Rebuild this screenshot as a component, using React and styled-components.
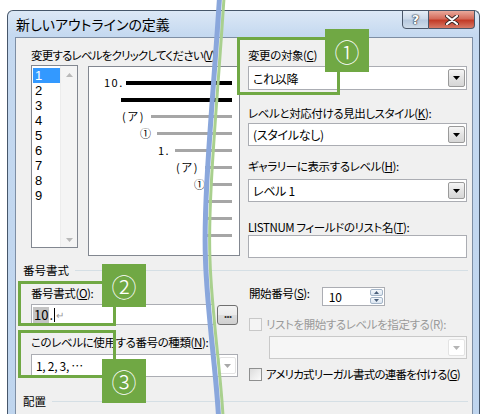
import React from 'react';
import styled, { createGlobalStyle } from 'styled-components';

const FONT = `"Noto Sans CJK JP", "Noto Sans", sans-serif`;

const GlobalStyle = createGlobalStyle`
  html, body { margin: 0; padding: 0; background: #fff; }
  body {
    font-family: ${FONT};
    font-size: 12px;
    color: #000;
    font-feature-settings: "palt";
  }
  * { box-sizing: border-box; }
`;

const Stage = styled.div`
  position: relative;
  width: 491px;
  height: 414px;
  overflow: hidden;
  background: #fff;
  padding: 10px 0 0 7px;
`;

const Window = styled.div`
  width: 473px;
  height: 420px;
  border: 1px solid #46566a;
  border-bottom: none;
  border-radius: 6px 6px 0 0;
  background: linear-gradient(#dce8f6, #c5d9f0 24px, #bfd5ee);
  padding: 0 6px 0 7px;
  display: flex;
  flex-direction: column;
`;

const TitleBar = styled.div`
  height: 26px;
  display: flex;
  justify-content: space-between;
  align-items: flex-start;
`;

const Title = styled.div`
  font-size: 14px;
  line-height: 26px;
  padding-left: 1px;
  color: #000;
`;

const Caption = styled.div`
  display: flex;
  margin-top: -1px;
  margin-right: -2px;
`;

const CapButton = styled.div`
  height: 19px;
  width: ${p => p.$w}px;
  border: 1px solid #4a5769;
  border-left-width: ${p => (p.$close ? 0 : 1)}px;
  border-radius: ${p => (p.$close ? '0 0 4px 0' : '0 0 0 4px')};
  background: ${p =>
    p.$close
      ? 'linear-gradient(#e9a99b, #d46b5a 45%, #c23b27 55%, #d77a66)'
      : 'linear-gradient(#e6eef7, #ccdaea 45%, #b7c9de 55%, #cfdcea)'};
  display: flex;
  align-items: center;
  justify-content: center;
  color: #fff;
  font-family: "DejaVu Sans", sans-serif;
  font-weight: bold;
  font-size: 13px;
  text-shadow: 0 0 1px #2b3440, 0 0 1px #2b3440, 0 0 2px #2b3440;
`;

const Client = styled.div`
  flex: 1;
  background: #f0f0f0;
  border: 1px solid #7d8ea4;
  border-bottom: none;
  display: flex;
  flex-direction: column;
`;

const TopSection = styled.div`
  display: flex;
  padding: 9px 0 0 15px;
  height: 220px;
`;

const LeftCol = styled.div`
  width: ${p => p.$w}px;
  display: flex;
  flex-direction: column;
`;

const RightCol = styled.div`
  width: ${p => p.$w}px;
  margin-left: ${p => p.$ml}px;
  display: flex;
  flex-direction: column;
`;

const Label = styled.div`
  line-height: 16px;
  height: 16px;
  font-size: 11.5px;
  letter-spacing: ${p => (p.$tight ? -0.8 : -0.4)}px;
  white-space: nowrap;
  margin-top: ${p => p.$mt || 0}px;
  color: ${p => (p.$disabled ? '#9a9a9a' : '#000')};
  u { text-decoration: underline; text-underline-offset: 1px; }
`;

const LevelRow = styled.div`
  display: flex;
  align-items: flex-start;
  margin-top: 2px;
`;

const ListBox = styled.div`
  width: 47px;
  height: 183px;
  background: #fff;
  border: 1px solid #828790;
  display: flex;
`;

const ListItems = styled.div`
  flex: 1;
  padding: 2px 0 0 1px;
`;

const ListItem = styled.div`
  height: 15px;
  line-height: 15px;
  font-family: "Liberation Sans", Arial, sans-serif;
  font-size: 13px;
  padding-left: 2px;
  background: ${p => (p.$selected ? '#3399ff' : 'transparent')};
  color: ${p => (p.$selected ? '#fff' : '#000')};
`;

const ScrollTrack = styled.div`
  width: 17px;
  background: #f4f4f4;
  border-left: 1px solid #ececec;
  display: flex;
  flex-direction: column;
  justify-content: space-between;
  align-items: center;
  padding: 7px 0 5px;
`;

const Preview = styled.div`
  width: 152px;
  height: 190px;
  margin: 1px 0 0 10px;
  background: #fff;
  border: 1px solid #828790;
  padding: 7px 7px 0 0;
  font-feature-settings: normal;
`;

const PreviewRow = styled.div`
  height: 17px;
  display: flex;
  align-items: center;
  padding-left: ${p => p.$lx}px;
`;

const PreviewLabel = styled.span`
  flex: none;
  width: ${p => p.$w}px;
  font-size: 11px;
  letter-spacing: 1.5px;
  white-space: nowrap;
  line-height: 17px;
`;

const Bar = styled.div`
  flex: 1;
  height: ${p => (p.$dark ? 4 : 3)}px;
  background: ${p => (p.$dark ? '#000' : '#a6a6a6')};
`;

const Select = styled.div`
  height: ${p => p.$h || 23}px;
  margin-top: ${p => p.$mt || 0}px;
  margin-left: ${p => p.$ml || 0}px;
  background: ${p => (p.$disabled ? '#f6f6f6' : '#fff')};
  border: 1px solid ${p => (p.$disabled ? '#c9c9c9' : '#abadb3')};
  display: flex;
  align-items: center;
  justify-content: space-between;
  padding: 0 1px 0 4px;
  font-size: 12px;
  letter-spacing: -0.3px;
  white-space: nowrap;
`;

const DropButton = styled.div`
  width: 17px;
  height: calc(100% - 4px);
  border: 1px solid ${p => (p.$light ? '#e3e3e3' : '#9a9a9a')};
  background: ${p => (p.$light ? '#fff' : 'linear-gradient(#f6f6f6, #e3e3e3 50%, #d6d6d6)')};
  border-radius: 2px;
  display: flex;
  align-items: center;
  justify-content: center;
`;

const TextInput = styled.div`
  height: ${p => p.$h || 22}px;
  margin-top: ${p => p.$mt || 0}px;
  background: #fff;
  border: 1px solid #abadb3;
`;

const GroupHeader = styled.div`
  display: flex;
  align-items: center;
  height: 16px;
  line-height: 16px;
  font-size: 11.5px;
  margin-top: ${p => p.$mt}px;
  padding: 0 4px 0 7px;
  &::after {
    content: '';
    flex: 1;
    height: 1px;
    margin-left: 6px;
    background: #d5dfe5;
  }
`;

const BottomSection = styled.div`
  display: flex;
  padding-left: 15px;
  height: 104px;
`;

const InputRow = styled.div`
  display: flex;
  align-items: center;
  margin-top: 3px;
  height: 21px;
`;

const FormatInput = styled.div`
  width: 183px;
  height: 21px;
  background: #fff;
  border: 1px solid #abadb3;
  display: flex;
  align-items: center;
  padding-left: 1px;
  font-size: 13px;
`;

const Selected = styled.span`
  background: #c4c4c4;
  padding: 0 1px;
  line-height: 16px;
`;

const Caret = styled.span`
  display: inline-block;
  width: 1px;
  height: 14px;
  background: #000;
  margin: 0 1px;
`;

const Pilcrow = styled.span`
  color: #9a9a9a;
  font-size: 10px;
`;

const DotsButton = styled.div`
  width: 21px;
  height: 20px;
  margin-left: 3px;
  border: 1px solid #707070;
  border-radius: 3px;
  background: linear-gradient(#f3f3f3, #ebebeb 50%, #dddddd 51%, #cfcfcf);
  font-size: 11px;
  line-height: 14px;
  text-align: center;
  letter-spacing: -1px;
  font-weight: bold;
  color: #333;
`;

const StartRow = styled.div`
  display: flex;
  align-items: flex-start;
  margin-top: 9px;
  height: 19px;
`;

const SpinBox = styled.div`
  width: 63px;
  height: 19px;
  margin: 0 0 0 12px;
  background: #fff;
  border: 1px solid #abadb3;
  display: flex;
  justify-content: space-between;
  padding-left: 6px;
  font-size: 12px;
  line-height: 17px;
`;

const SpinButtons = styled.div`
  width: 15px;
  display: flex;
  flex-direction: column;
  padding: 1px;
  gap: 1px;
`;

const SpinHalf = styled.div`
  flex: 1;
  border: 1px solid #a4b5c8;
  border-radius: 2px;
  background: linear-gradient(#f4f8fc, #dbe5f0);
  display: flex;
  align-items: center;
  justify-content: center;
`;

const CheckRow = styled.div`
  display: flex;
  align-items: center;
  height: 16px;
  margin-top: ${p => p.$mt}px;
  gap: 4px;
`;

const CheckBox = styled.div`
  width: 13px;
  height: 13px;
  flex: none;
  border: 1px solid ${p => (p.$disabled ? '#c8c8c8' : '#8e8f8f')};
  background: ${p => (p.$disabled ? '#f4f4f4' : 'linear-gradient(135deg, #dcdcdc, #fbfbfb)')};
`;

const Outline = styled.div`
  position: absolute;
  left: ${p => p.$x}px;
  top: ${p => p.$y}px;
  width: ${p => p.$w}px;
  height: ${p => p.$h}px;
  border: 3px solid #70a844;
`;

const Badge = styled.div`
  position: absolute;
  left: ${p => p.$x}px;
  top: ${p => p.$y}px;
  width: 44px;
  height: ${p => p.$h}px;
  background: #70a844;
  color: #fff;
  font-size: 25px;
  font-weight: 300;
  display: flex;
  align-items: center;
  justify-content: center;
  font-feature-settings: normal;
`;

const Tear = styled.svg`
  position: absolute;
  left: 0;
  top: 0;
  pointer-events: none;
`;

const Arrow = ({ up, color = '#000', w = 7, h = 4 }) => (
  <svg width={w} height={h} viewBox="0 0 7 4">
    <polygon points={up ? '0,4 7,4 3.5,0' : '0,0 7,0 3.5,4'} fill={color} />
  </svg>
);

const rows = [
  { label: '10.', lx: 15, bx: 37, dark: true },
  { label: '', lx: 32, bx: 32, dark: true },
  { label: '(ア)', lx: 33, bx: 62 },
  { label: '①', lx: 51, bx: 68 },
  { label: '1.', lx: 69, bx: 86 },
  { label: '(ア)', lx: 87, bx: 116 },
  { label: '①', lx: 105, bx: 122 },
  { label: '', lx: 118, bx: 118 },
  { label: '', lx: 118, bx: 118 },
  { label: '', lx: 118, bx: 118 },
];

const tearPath = 'M219.5 -2 C 213 100, 203 200, 205.5 260 C 207 310, 216 370, 218.5 416';

export default function App() {
  return (
    <Stage>
      <GlobalStyle />
      <Window>
        <TitleBar>
          <Title>新しいアウトラインの定義</Title>
          <Caption>
            <CapButton $w={27}>?</CapButton>
            <CapButton $w={46} $close>
              <svg width="14" height="10" viewBox="0 0 14 10">
                <path d="M2 1 L12 9 M12 1 L2 9" stroke="#3a2a28" strokeWidth="4" strokeLinecap="round" />
                <path d="M2 1 L12 9 M12 1 L2 9" stroke="#fff" strokeWidth="2.2" strokeLinecap="round" />
              </svg>
            </CapButton>
          </Caption>
        </TitleBar>
        <Client>
          <TopSection>
            <LeftCol $w={209}>
              <Label $tight>変更するレベルをクリックしてください(<u>V</u>)</Label>
              <LevelRow>
                <ListBox>
                  <ListItems>
                    {[1, 2, 3, 4, 5, 6, 7, 8, 9].map(n => (
                      <ListItem key={n} $selected={n === 1}>{n}</ListItem>
                    ))}
                  </ListItems>
                  <ScrollTrack>
                    <Arrow up color="#b9b9b9" />
                    <Arrow color="#b9b9b9" />
                  </ScrollTrack>
                </ListBox>
                <Preview>
                  {rows.map((r, i) => (
                    <PreviewRow key={i} $lx={r.lx}>
                      <PreviewLabel $w={r.bx - r.lx}>{r.label}</PreviewLabel>
                      <Bar $dark={r.dark} />
                    </PreviewRow>
                  ))}
                </Preview>
              </LevelRow>
            </LeftCol>
            <RightCol $w={219} $ml={8}>
              <Label>変更の対象(<u>C</u>)</Label>
              <Select $mt={3} $h={24}>
                これ以降
                <DropButton><Arrow /></DropButton>
              </Select>
              <Label $mt={15}>レベルと対応付ける見出しスタイル(<u>K</u>):</Label>
              <Select $mt={2}>
                (スタイルなし)
                <DropButton><Arrow /></DropButton>
              </Select>
              <Label $mt={12}>ギャラリーに表示するレベル(<u>H</u>):</Label>
              <Select $mt={5}>
                レベル 1
                <DropButton><Arrow /></DropButton>
              </Select>
              <Label $mt={17}>LISTNUM フィールドのリスト名(<u>T</u>):</Label>
              <TextInput $h={23} />
            </RightCol>
          </TopSection>
          <GroupHeader $mt={4}>番号書式</GroupHeader>
          <BottomSection>
            <LeftCol $w={207}>
              <Label $mt={7}>番号書式(<u>O</u>):</Label>
              <InputRow>
                <FormatInput>
                  <Selected>10</Selected>.<Caret />
                  <Pilcrow>↵</Pilcrow>
                </FormatInput>
                <DotsButton>...</DotsButton>
              </InputRow>
              <Label $mt={9}>このレベルに使用する番号の種類(<u>N</u>):</Label>
              <Select $mt={4}>
                1, 2, 3, …
                <DropButton $light><Arrow color="#a8a8a8" /></DropButton>
              </Select>
            </LeftCol>
            <RightCol $w={218} $ml={11}>
              <StartRow>
                <Label style={{ marginTop: -2 }}>開始番号(<u>S</u>):</Label>
                <SpinBox>
                  10
                  <SpinButtons>
                    <SpinHalf><Arrow up color="#4a5f7a" w={5} h={3} /></SpinHalf>
                    <SpinHalf><Arrow color="#4a5f7a" w={5} h={3} /></SpinHalf>
                  </SpinButtons>
                </SpinBox>
              </StartRow>
              <CheckRow $mt={10}>
                <CheckBox $disabled />
                <Label $disabled>リストを開始するレベルを指定する(R):</Label>
              </CheckRow>
              <Select $mt={4} $ml={20} $h={24} $disabled>
                <span />
                <DropButton $light><Arrow color="#b5b5b5" /></DropButton>
              </Select>
              <CheckRow $mt={7}>
                <CheckBox />
                <Label $tight>アメリカ式リーガル書式の連番を付ける(<u>G</u>)</Label>
              </CheckRow>
            </RightCol>
          </BottomSection>
          <GroupHeader $mt={11}>配置</GroupHeader>
        </Client>
      </Window>

      <Outline $x={237} $y={37} $w={103} $h={58} />
      <Badge $x={325} $y={29} $h={43}>①</Badge>
      <Outline $x={18} $y={281} $w={98} $h={45} />
      <Badge $x={102} $y={264} $h={43}>②</Badge>
      <Outline $x={18} $y={330} $w={98} $h={48} />
      <Badge $x={102} $y={359} $h={44}>③</Badge>

      <Tear width="491" height="414" viewBox="0 0 491 414">
        <path d={tearPath} transform="translate(4.5 0)" fill="none" stroke="#a9d08e" strokeWidth="3" />
        <path d={tearPath} fill="none" stroke="#8aa7dc" strokeWidth="5" />
      </Tear>
    </Stage>
  );
}
